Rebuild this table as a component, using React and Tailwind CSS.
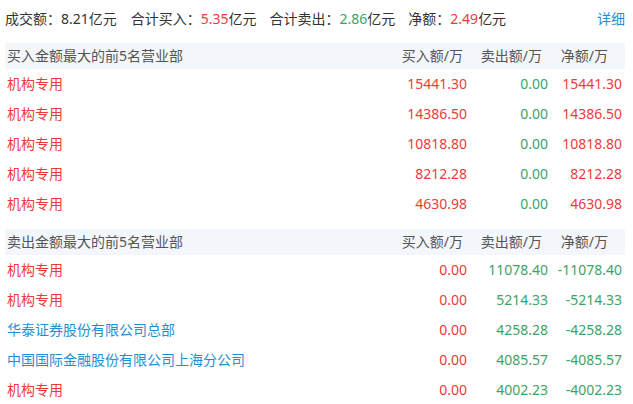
import React from 'react';

const RED = 'text-[#ec3b3b]';
const GREEN = 'text-[#3ba46a]';
const BLUE = 'text-[#1f8fd4]';

const buyRows = [
  { name: '机构专用', buy: '15441.30', sell: '0.00', net: '15441.30' },
  { name: '机构专用', buy: '14386.50', sell: '0.00', net: '14386.50' },
  { name: '机构专用', buy: '10818.80', sell: '0.00', net: '10818.80' },
  { name: '机构专用', buy: '8212.28', sell: '0.00', net: '8212.28' },
  { name: '机构专用', buy: '4630.98', sell: '0.00', net: '4630.98' },
];

const sellRows = [
  { name: '机构专用', buy: '0.00', sell: '11078.40', net: '-11078.40' },
  { name: '机构专用', buy: '0.00', sell: '5214.33', net: '-5214.33' },
  { name: '华泰证券股份有限公司总部', buy: '0.00', sell: '4258.28', net: '-4258.28', blue: true },
  { name: '中国国际金融股份有限公司上海分公司', buy: '0.00', sell: '4085.57', net: '-4085.57', blue: true },
  { name: '机构专用', buy: '0.00', sell: '4002.23', net: '-4002.23' },
];

const Section = ({ title, rows, positive }) => (
  <div>
    {/* 表头 */}
    <div className="flex items-center h-[26px] bg-[#f3f6fa] text-[#555]">
      <div className="flex-1 pl-[2px]">{title}</div>
      <div className="w-[80px] text-right pr-[7px]">买入额/万</div>
      <div className="w-[78px] text-right pr-[6px]">卖出额/万</div>
      <div className="w-[77px] text-right pr-[17px]">净额/万</div>
    </div>
    {rows.map((r, i) => (
      <div key={i} className="flex items-center h-[30px]">
        <div className={`flex-1 pl-[2px] ${r.blue ? BLUE : RED}`}>{r.name}</div>
        <div className={`w-[80px] text-right pr-[3px] ${RED}`}>{r.buy}</div>
        <div className={`w-[78px] text-right pr-[0px] ${GREEN}`}>{r.sell}</div>
        <div className={`w-[77px] text-right pr-[3px] ${positive ? RED : GREEN}`}>{r.net}</div>
      </div>
    ))}
  </div>
);

export default function App() {
  return (
    <div
      className="w-[633px] h-[404px] overflow-hidden bg-white text-[14px] leading-none text-[#333] pl-[5px] pr-[8px]"
      style={{ fontFamily: '"Noto Sans", "Noto Sans CJK SC", sans-serif' }}
    >
      {/* 汇总 */}
      <div className="flex items-center h-[36px] pt-[1px]">
        <span className="mr-[14px]">成交额：8.21亿元</span>
        <span className="mr-[13px]">
          合计买入：<span className={RED}>5.35</span>亿元
        </span>
        <span className="mr-[13px]">
          合计卖出：<span className={GREEN}>2.86</span>亿元
        </span>
        <span>
          净额：<span className={RED}>2.49</span>亿元
        </span>
        <span className={`ml-auto ${BLUE}`}>详细</span>
      </div>

      <div className="mt-[7px]">
        <Section title="买入金额最大的前5名营业部" rows={buyRows} positive />
      </div>
      <div className="mt-[10px]">
        <Section title="卖出金额最大的前5名营业部" rows={sellRows} />
      </div>
    </div>
  );
}
